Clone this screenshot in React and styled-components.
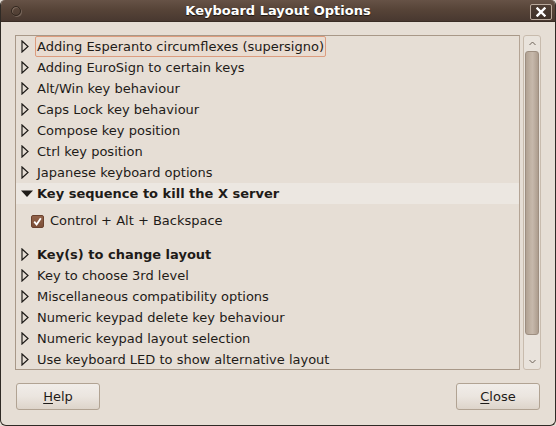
import React from "react";
import styled, { createGlobalStyle } from "styled-components";

const GlobalStyle = createGlobalStyle`
  html, body {
    margin: 0;
    padding: 0;
    background: #e6ded5;
  }
  * {
    box-sizing: border-box;
  }
`;

const Window = styled.div`
  width: 556px;
  height: 426px;
  display: flex;
  flex-direction: column;
  font-family: "DejaVu Sans", "Liberation Sans", sans-serif;
  font-size: 13px;
  color: #1e1b18;
  background: #e6ded5;
  border: 1px solid #2f2a25;
  border-top: none;
  border-radius: 5px 5px 6px 6px;
  overflow: hidden;
`;

const TitleBar = styled.div`
  height: 22px;
  flex: none;
  display: flex;
  align-items: center;
  justify-content: center;
  position: relative;
  background: linear-gradient(#665246 0%, #574438 45%, #483830 100%);
  border-bottom: 1px solid #3a2d25;
  color: #ffffff;
  font-weight: bold;
  font-size: 13px;
  text-shadow: 0 1px 1px #1b120d;
`;

const MenuDot = styled.span`
  position: absolute;
  left: 10px;
  top: 6px;
  width: 10px;
  height: 10px;
  border-radius: 50%;
  border: 1px solid #32271f;
  box-shadow: inset 1px 1px 0 #7d6a5d, 1px 1px 0 #76655a;
`;

const CloseBox = styled.span`
  position: absolute;
  right: 3px;
  top: 4px;
  width: 22px;
  height: 16px;
  border: 1px solid #b9a99c;
  border-radius: 2px;
  background: linear-gradient(#4e3d33, #3f3128);
  display: flex;
  align-items: center;
  justify-content: center;
`;

const Body = styled.div`
  flex: 1;
  display: flex;
  flex-direction: column;
  padding: 13px 14px 16px 14px;
`;

const ListArea = styled.div`
  display: flex;
  gap: 3px;
  height: 335px;
`;

const Frame = styled.div`
  width: 505px;
  height: 335px;
  border: 1px solid #a89888;
  border-right-color: #b4a495;
  background: #e6ded5;
  display: flex;
  flex-direction: column;
  overflow: hidden;
`;

const Row = styled.div`
  height: 21px;
  flex: none;
  display: flex;
  align-items: center;
  padding-left: 5px;
  background: ${(p) => (p.$active ? "#ece7e1" : "transparent")};
  font-weight: ${(p) => (p.$bold ? "bold" : "normal")};
`;

const Expander = styled.span`
  width: 14px;
  height: 21px;
  flex: none;
  display: flex;
  align-items: center;
  justify-content: flex-start;
`;

const Label = styled.span`
  padding: 0 1px;
  line-height: 19px;
  white-space: nowrap;
  border: 1px solid ${(p) => (p.$focus ? "#dc9c7e" : "transparent")};
  border-radius: 2px;
  background: ${(p) => (p.$focus ? "#e9dcd1" : "transparent")};
`;

const ChildBlock = styled.div`
  height: 40px;
  flex: none;
  padding: 6px 0 0 15px;
`;

const CheckRow = styled.label`
  display: flex;
  align-items: center;
  gap: 6px;
  height: 21px;
`;

const CheckBox = styled.span`
  width: 13px;
  height: 13px;
  border-radius: 2px;
  background: linear-gradient(#93634a, #7c4f38);
  border: 1px solid #6a412d;
  display: flex;
  align-items: center;
  justify-content: center;
  margin-top: 1px;
`;

const Scrollbar = styled.div`
  width: 18px;
  height: 335px;
  border: 1px solid #c8bbad;
  border-radius: 3px;
  background: #e9e3dc;
  display: flex;
  flex-direction: column;
  align-items: center;
  padding: 0 1px;
`;

const ArrowCell = styled.div`
  height: 15px;
  width: 100%;
  flex: none;
  display: flex;
  align-items: center;
  justify-content: center;
`;

const Thumb = styled.div`
  width: 14px;
  height: 284px;
  flex: none;
  border: 1px solid #9d8e80;
  border-radius: 3px;
  background: linear-gradient(
    90deg,
    #b2a293 0%,
    #c2b4a6 40%,
    #c6b8ab 55%,
    #ad9d8e 100%
  );
`;

const Spacer = styled.div`
  flex: 1;
`;

const Buttons = styled.div`
  display: flex;
  justify-content: space-between;
  margin-top: 13px;
  padding: 0 1px 0 1px;
`;

const Button = styled.button`
  width: 84px;
  height: 27px;
  border: 1px solid #b1a393;
  border-radius: 3px;
  background: linear-gradient(#f1ede9 0%, #ebe5df 50%, #ddd4ca 100%);
  font-family: inherit;
  font-size: 13px;
  color: #1e1b18;
  padding: 0;
  u {
    text-decoration: underline;
    text-underline-offset: 2px;
  }
`;

const collapsedBefore = [
  "Adding Esperanto circumflexes (supersigno)",
  "Adding EuroSign to certain keys",
  "Alt/Win key behaviour",
  "Caps Lock key behaviour",
  "Compose key position",
  "Ctrl key position",
  "Japanese keyboard options",
];

const collapsedAfter = [
  { text: "Key(s) to change layout", bold: true },
  { text: "Key to choose 3rd level" },
  { text: "Miscellaneous compatibility options" },
  { text: "Numeric keypad delete key behaviour" },
  { text: "Numeric keypad layout selection" },
  { text: "Use keyboard LED to show alternative layout" },
];

const OpenArrow = () => (
  <svg width="8" height="13" viewBox="0 0 8 13">
    <path d="M1 1 L7 6.5 L1 12 Z" fill="none" stroke="#1e1b18" strokeWidth="1.2" strokeLinejoin="miter" />
  </svg>
);

const DownArrow = () => (
  <svg width="12" height="8" viewBox="0 0 12 8">
    <path d="M0 0.5 L12 0.5 L6 7 Z" fill="#1e1b18" />
  </svg>
);

export default function App() {
  return (
    <>
      <GlobalStyle />
      <Window>
        <TitleBar>
          <MenuDot />
          Keyboard Layout Options
          <CloseBox>
            <svg width="10" height="10" viewBox="0 0 10 10">
              <path d="M1.5 1.5 L8.5 8.5 M8.5 1.5 L1.5 8.5" stroke="#fff" strokeWidth="2.4" strokeLinecap="square" />
            </svg>
          </CloseBox>
        </TitleBar>
        <Body>
          <ListArea>
            <Frame>
              {collapsedBefore.map((t, i) => (
                <Row key={t}>
                  <Expander>
                    <OpenArrow />
                  </Expander>
                  <Label $focus={i === 0}>{t}</Label>
                </Row>
              ))}
              <Row $active $bold>
                <Expander>
                  <DownArrow />
                </Expander>
                <Label>Key sequence to kill the X server</Label>
              </Row>
              <ChildBlock>
                <CheckRow>
                  <CheckBox>
                    <svg width="9" height="9" viewBox="0 0 9 9">
                      <path d="M1.2 4.6 L3.6 7.4 L7.8 1.2" fill="none" stroke="#fff" strokeWidth="1.8" />
                    </svg>
                  </CheckBox>
                  Control + Alt + Backspace
                </CheckRow>
              </ChildBlock>
              {collapsedAfter.map((r) => (
                <Row key={r.text} $bold={r.bold}>
                  <Expander>
                    <OpenArrow />
                  </Expander>
                  <Label>{r.text}</Label>
                </Row>
              ))}
            </Frame>
            <Scrollbar>
              <ArrowCell>
                <svg width="7" height="5" viewBox="0 0 7 5">
                  <path d="M0.5 4 L3.5 1 L6.5 4" fill="none" stroke="#6d6259" strokeWidth="1" />
                </svg>
              </ArrowCell>
              <Thumb />
              <Spacer />
              <ArrowCell>
                <svg width="7" height="5" viewBox="0 0 7 5">
                  <path d="M0.5 1 L3.5 4 L6.5 1" fill="none" stroke="#6d6259" strokeWidth="1" />
                </svg>
              </ArrowCell>
            </Scrollbar>
          </ListArea>
          <Buttons>
            <Button>
              <u>H</u>elp
            </Button>
            <Button>
              <u>C</u>lose
            </Button>
          </Buttons>
        </Body>
      </Window>
    </>
  );
}
